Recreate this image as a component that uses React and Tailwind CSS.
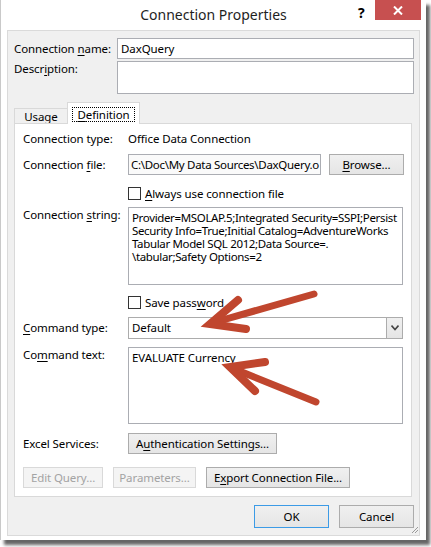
import React from 'react';

const U = ({ children }) => <span className="underline underline-offset-[2px] decoration-[1px]">{children}</span>;

const Btn = ({ children, className = '', disabled }) => (
  <div
    className={`flex items-center justify-center h-full border ${
      disabled
        ? 'border-[#d9d9d9] bg-[#f4f4f4] text-[#a3a3a3]'
        : 'border-[#acacac] bg-gradient-to-b from-[#f0f0f0] to-[#e5e5e5] text-black'
    } ${className}`}
  >
    {children}
  </div>
);

const Check = ({ children }) => (
  <div className="flex items-center h-full">
    <div className="w-[13px] h-[13px] border border-[#333333] bg-white" />
    <span className="ml-[4px] leading-[16px]">{children}</span>
  </div>
);

const Label = ({ children, top }) => (
  <div className={`w-[113px] pl-[8px] shrink-0 leading-[16px] ${top ? 'self-start' : ''}`}>{children}</div>
);

export default function App() {
  return (
    <div className="relative w-[431px] h-[547px] bg-white overflow-hidden font-['Noto_Sans',sans-serif] text-[11.5px] tracking-[-0.1px] text-black">
      <div className="w-[426px] h-[540px] bg-white border-l border-[#c9c9c9] shadow-[4px_5px_3px_rgba(0,0,0,0.6)] flex flex-col">
        {/* Title bar */}
        <div className="relative h-[30px] shrink-0 flex items-center justify-center">
          <span className="text-[14px] tracking-normal leading-[20px] text-[#1e1e1e] -mt-[1px]">Connection Properties</span>
          <span className="absolute left-[357px] top-[4px] text-[14px] font-bold leading-[18px]">?</span>
          <div className="absolute left-[374px] top-0 w-[46px] h-[20px] bg-[#c75050] flex items-center justify-center">
            <svg width="10" height="9" viewBox="0 0 10 9">
              <path d="M1 0.5 L9 8.5 M9 0.5 L1 8.5" stroke="white" strokeWidth="2" />
            </svg>
          </div>
        </div>

        {/* Client area */}
        <div className="ml-[6px] w-[413px] h-[506px] border border-[#dadada] bg-[#f0f0f0] flex flex-col">
          <div className="mt-[7px] flex items-center h-[21px]">
            <div className="w-[109px] pl-[6px] shrink-0">Connection <U>n</U>ame:</div>
            <div className="w-[297px] h-[21px] border border-[#abadb3] bg-white flex items-center px-[3px]">DaxQuery</div>
          </div>
          <div className="mt-[2px] flex h-[33px]">
            <div className="w-[109px] pl-[6px] shrink-0 leading-[16px]">Descr<U>i</U>ption:</div>
            <div className="w-[297px] h-[33px] border border-[#abadb3] bg-white" />
          </div>

          {/* Tabs */}
          <div className="mt-[8px] ml-[6px] flex items-end h-[22px]">
            <div className="w-[53px] h-[16px] border-l border-t border-[#d9d9d9] bg-[#f0f0f0] flex items-center justify-center leading-[14px]">
              Usa<U>g</U>e
            </div>
            <div className="relative z-10 w-[73px] h-[22px] border-l border-t border-r border-[#d9d9d9] bg-white flex items-start justify-center pt-[4px]">
              <span className="border border-dotted border-black px-[4px] leading-[13px] h-[15px]">
                <U>D</U>efinition
              </span>
            </div>
          </div>
          <div className="-mt-[1px] ml-[6px] w-[398px] h-[374px] border border-[#d9d9d9] bg-white flex flex-col">
            <div className="mt-[6px] h-[18px] flex items-center">
              <Label>Connection type:</Label>
              <span>Office Data Connection</span>
            </div>
            <div className="mt-[6px] h-[21px] flex items-center">
              <Label>Connection <U>f</U>ile:</Label>
              <div className="w-[193px] h-[21px] border border-[#abadb3] bg-[#fafafa] px-[2px] flex items-center overflow-hidden whitespace-nowrap tracking-[-0.3px]">
                C:\Doc\My Data Sources\DaxQuery.o
              </div>
              <Btn className="ml-[8px] w-[75px]">
                <span><U>B</U>rowse...</span>
              </Btn>
            </div>
            <div className="mt-[12px] h-[13px] flex">
              <Label />
              <Check>
                <U>A</U>lways use connection file
              </Check>
            </div>
            <div className="mt-[7px] h-[78px] flex">
              <Label top>Connection <U>s</U>tring:</Label>
              <div className="w-[275px] h-[78px] border border-[#abadb3] bg-white pl-[3px] pt-[3px] leading-[13px] whitespace-pre tracking-[-0.35px]">
                {'Provider=MSOLAP.5;Integrated Security=SSPI;Persist\nSecurity Info=True;Initial Catalog=AdventureWorks\nTabular Model SQL 2012;Data Source=.\n\\tabular;Safety Options=2'}
              </div>
            </div>
            <div className="mt-[11px] h-[13px] flex">
              <Label />
              <Check>
                Save pass<U>w</U>ord
              </Check>
            </div>
            <div className="mt-[8px] h-[22px] flex items-center">
              <Label>
                <U>C</U>ommand type:
              </Label>
              <div className="w-[275px] h-[22px] border border-[#acacac] bg-white flex">
                <div className="flex-1 flex items-center pl-[3px]">Default</div>
                <div className="w-[16px] border-l border-[#acacac] bg-gradient-to-b from-[#f0f0f0] to-[#e5e5e5] flex items-center justify-center">
                  <svg width="8" height="6" viewBox="0 0 8 6">
                    <path d="M0.5 0.5 L4 4.5 L7.5 0.5" stroke="#444" strokeWidth="1.6" fill="none" />
                  </svg>
                </div>
              </div>
            </div>
            <div className="mt-[8px] h-[77px] flex">
              <Label top>
                Co<U>m</U>mand text:
              </Label>
              <div className="w-[275px] h-[77px] border border-[#abadb3] bg-white pl-[3px] pt-[2px] leading-[16px]">
                EVALUATE Currency
              </div>
            </div>
            <div className="mt-[9px] h-[21px] flex items-center">
              <Label>Excel Services:</Label>
              <Btn className="w-[149px]">
                <span>
                  A<U>u</U>thentication Settings...
                </span>
              </Btn>
            </div>
            <div className="mt-[13px] h-[21px] flex pl-[8px] gap-[10px]">
              <Btn disabled className="w-[80px]">Edit Query...</Btn>
              <Btn disabled className="w-[83px]">Parameters...</Btn>
              <Btn className="w-[144px]">
                <span>
                  E<U>x</U>port Connection File...
                </span>
              </Btn>
            </div>
          </div>

          <div className="mt-[8px] h-[23px] flex justify-end gap-[10px] pr-[5px]">
            <Btn className="w-[75px] !border-[#3c9be6]">OK</Btn>
            <Btn className="w-[75px]">Cancel</Btn>
          </div>
        </div>
      </div>

      {/* Resize grip */}
      <svg className="absolute left-[411px] top-[526px]" width="8" height="8" viewBox="0 0 8 8">
        <path d="M7 1 L1 7 M7 4 L4 7 M7 7 L7 7" stroke="#9a9a9a" strokeWidth="1" />
      </svg>

      {/* Annotation arrows */}
      <svg className="absolute left-0 top-0 pointer-events-none" width="431" height="547" viewBox="0 0 431 547">
        <g stroke="#c0462e" fill="none" strokeLinecap="round" strokeLinejoin="miter">
          <path d="M212 323 L314 294" strokeWidth="7" />
          <path d="M238 300 L210 324 L246 329" strokeWidth="8" />
          <path d="M232 368 L316 402" strokeWidth="7" />
          <path d="M265 362 L230 367 L255 391" strokeWidth="8" />
        </g>
      </svg>
    </div>
  );
}
